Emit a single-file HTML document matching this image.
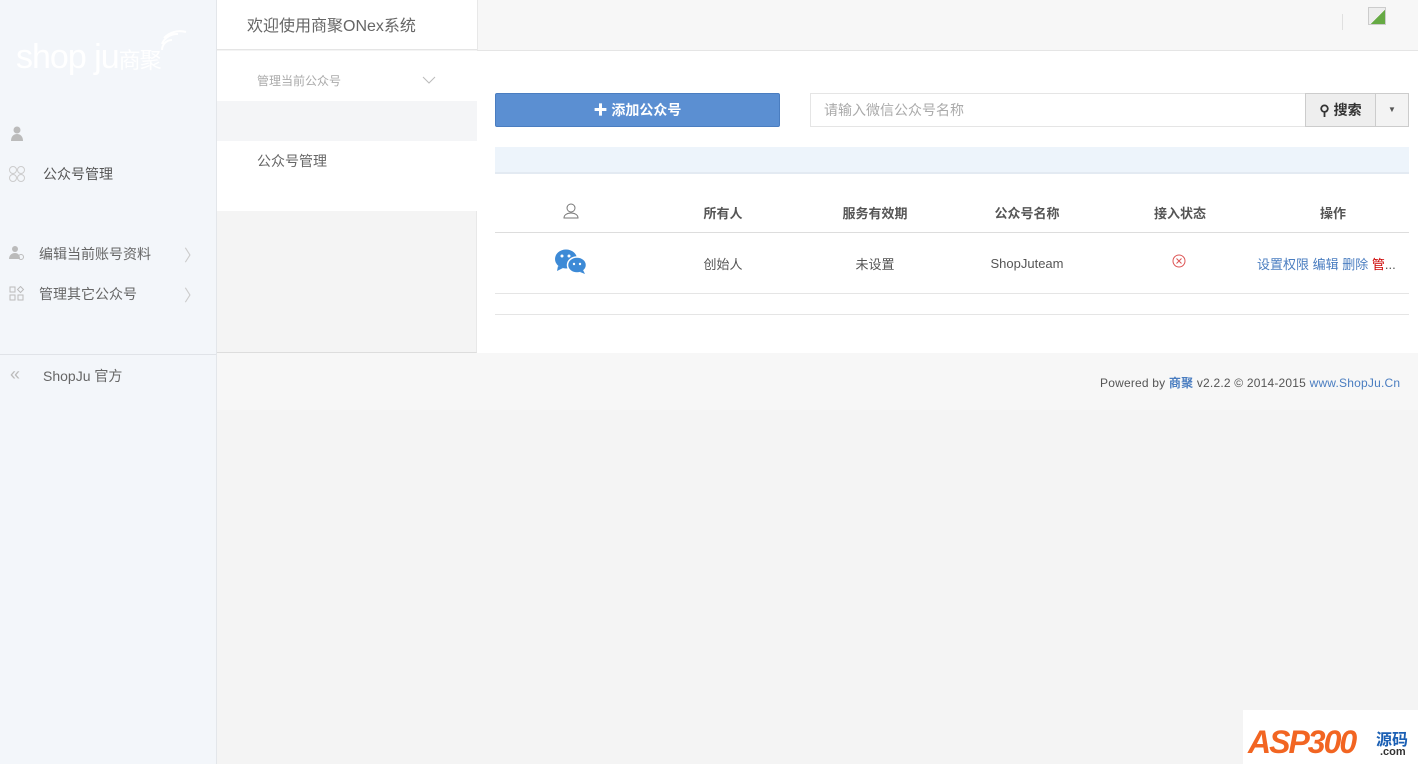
<!DOCTYPE html>
<html><head><meta charset="utf-8"><style>
*{margin:0;padding:0;box-sizing:border-box}
body{width:1418px;height:764px;overflow:hidden;background:#f4f4f4;font-family:"Liberation Sans","Noto Sans CJK SC",sans-serif;position:relative;color:#555}
.abs{position:absolute}
</style></head><body>
<!-- sidebar -->
<div class="abs" style="left:0;top:0;width:217px;height:764px;background:#f3f6fa;border-right:1px solid #e3e6ea"></div>
<div class="abs" style="left:16px;top:38px;font-size:34px;color:#fff;letter-spacing:-1px;font-family:'Liberation Sans',sans-serif">shop ju<span style="font-size:22px;font-family:'Noto Sans CJK SC',sans-serif">商聚</span></div>
<svg class="abs" style="left:160px;top:30px" width="30" height="24"><path d="M2 20a10 10 0 0 1 10-10M2 14a16 16 0 0 1 16-10M4 8a22 22 0 0 1 22-6" stroke="#fff" stroke-width="2" fill="none"/></svg>
<svg class="abs" style="left:10px;top:126px" width="14" height="16"><circle cx="7" cy="4" r="3.5" fill="#bbb"/><path d="M1 15c0-5 3-7 6-7s6 2 6 7z" fill="#bbb"/></svg>
<svg class="abs" style="left:8px;top:165px" width="18" height="18" fill="none" stroke="#ccc"><circle cx="5" cy="5" r="3.5"/><circle cx="13" cy="5" r="3.5"/><circle cx="5" cy="13" r="3.5"/><circle cx="13" cy="13" r="3.5"/></svg>
<div class="abs" style="left:43px;top:164px;font-size:14px;color:#555">公众号管理</div>
<svg class="abs" style="left:9px;top:245px" width="16" height="16"><circle cx="6" cy="4" r="3" fill="#bbb"/><path d="M0 14c0-4 3-6 6-6s5 2 5 6z" fill="#bbb"/><circle cx="12" cy="12" r="2.5" stroke="#bbb" fill="none"/></svg>
<div class="abs" style="left:39px;top:244px;font-size:14px;color:#666">编辑当前账号资料</div>
<div class="abs" style="left:184px;top:242px;font-size:16px;color:#ccc">〉</div>
<svg class="abs" style="left:9px;top:286px" width="16" height="16" fill="none" stroke="#bbb"><rect x="1" y="1" width="5" height="5"/><rect x="1" y="9" width="5" height="5"/><rect x="9" y="9" width="5" height="5"/><path d="M11.5 0.5l3 3-3 3-3-3z"/></svg>
<div class="abs" style="left:39px;top:284px;font-size:14px;color:#666">管理其它公众号</div>
<div class="abs" style="left:184px;top:282px;font-size:16px;color:#ccc">〉</div>
<div class="abs" style="left:0;top:354px;width:216px;border-top:1px solid #e0e3e8"></div>
<div class="abs" style="left:10px;top:364px;font-size:18px;color:#bbb">«</div>
<div class="abs" style="left:43px;top:366px;font-size:14px;color:#666">ShopJu 官方</div>
<!-- second column -->
<div class="abs" style="left:217px;top:0;width:260px;height:50px;background:#fff;border-bottom:1px solid #e5e5e5"></div>
<div class="abs" style="left:247px;top:12px;font-size:16px;color:#666">欢迎使用商聚ONex系统</div>
<div class="abs" style="left:217px;top:51px;width:260px;height:50px;background:#fff"></div>
<div class="abs" style="left:257px;top:72px;font-size:12px;color:#aaa">管理当前公众号</div>
<svg class="abs" style="left:422px;top:76px" width="14" height="9"><path d="M1 1l6 6 6-6" stroke="#bbb" fill="none"/></svg>
<div class="abs" style="left:217px;top:101px;width:260px;height:40px;background:#f4f5f7"></div>
<div class="abs" style="left:217px;top:141px;width:260px;height:70px;background:#fff"></div>
<div class="abs" style="left:257px;top:151px;font-size:14px;color:#666">公众号管理</div>
<div class="abs" style="left:217px;top:211px;width:260px;height:142px;background:#f4f4f4;border-bottom:1px solid #ddd;border-right:1px solid #e8e8e8"></div>
<!-- top bar -->
<div class="abs" style="left:477px;top:0;width:941px;height:51px;background:#f7f7f7;border-bottom:1px solid #e5e5e5;border-left:1px solid #e8e8e8"></div>
<div class="abs" style="left:1342px;top:14px;width:1px;height:16px;background:#e0e0e0"></div>
<div class="abs" style="left:1368px;top:7px;width:18px;height:18px;border:1px solid #ccc;background:linear-gradient(135deg,#eee 55%,#6a4 55%)"></div>
<!-- main -->
<div class="abs" style="left:477px;top:51px;width:941px;height:302px;background:#fff"></div>
<div class="abs" style="left:495px;top:93px;width:285px;height:34px;background:#5b8fd2;border:1px solid #4a7dc0;border-radius:2px;color:#fff;font-size:14px;font-weight:bold;text-align:center;line-height:32px">✚ 添加公众号</div>
<div class="abs" style="left:810px;top:93px;width:496px;height:34px;border:1px solid #e5e5e5;font-size:14px;color:#aaa;line-height:32px;padding-left:13px">请输入微信公众号名称</div>
<div class="abs" style="left:1305px;top:93px;width:71px;height:34px;background:#eee;border:1px solid #ccc;font-size:14px;font-weight:bold;color:#333;line-height:32px;text-align:center">⚲ 搜索</div>
<div class="abs" style="left:1375px;top:93px;width:34px;height:34px;background:#f3f3f3;border:1px solid #ccc;font-size:8px;color:#555;line-height:32px;text-align:center">▼</div>
<div class="abs" style="left:495px;top:147px;width:914px;height:27px;background:#edf4fb;border-bottom:2px solid #e3eaf2"></div>
<svg class="abs" style="left:563px;top:203px" width="16" height="16" fill="none" stroke="#777"><circle cx="8" cy="5" r="4"/><path d="M1 15c0-3 3-5 7-5s7 2 7 5z"/></svg>
<div class="abs" style="top:203px;left:495px;width:914px;font-size:13px;font-weight:bold;color:#555">
<span class="abs" style="left:185px;width:86px;text-align:center">所有人</span>
<span class="abs" style="left:330px;width:100px;text-align:center">服务有效期</span>
<span class="abs" style="left:482px;width:100px;text-align:center">公众号名称</span>
<span class="abs" style="left:635px;width:100px;text-align:center">接入状态</span>
<span class="abs" style="left:788px;width:100px;text-align:center">操作</span>
</div>
<div class="abs" style="left:495px;top:232px;width:914px;border-top:1px solid #ddd"></div>
<svg class="abs" style="left:554px;top:248px" width="34" height="28"><ellipse cx="12" cy="11" rx="11" ry="9.5" fill="#3d8ad6"/><path d="M4 18l-1 5 6-3z" fill="#3d8ad6"/><ellipse cx="23" cy="17" rx="9.5" ry="8" fill="#3d8ad6" stroke="#fff" stroke-width="1.5"/><path d="M29 22l2 4-5-2z" fill="#3d8ad6"/><circle cx="8" cy="8" r="1.5" fill="#fff"/><circle cx="15" cy="8" r="1.5" fill="#fff"/><circle cx="20" cy="16" r="1.2" fill="#fff"/><circle cx="26" cy="16" r="1.2" fill="#fff"/></svg>
<div class="abs" style="top:254px;left:495px;width:914px;font-size:13px;color:#555">
<span class="abs" style="left:185px;width:86px;text-align:center;top:0">创始人</span>
<span class="abs" style="left:330px;width:100px;text-align:center;top:0">未设置</span>
<span class="abs" style="left:482px;width:100px;text-align:center;top:1px;line-height:17px">ShopJuteam</span>
</div>
<svg class="abs" style="left:1172px;top:254px" width="14" height="14" fill="none" stroke="#d55"><circle cx="7" cy="7" r="6"/><path d="M4.5 4.5l5 5M9.5 4.5l-5 5"/></svg>
<div class="abs" style="left:1257px;top:254px;font-size:13px;color:#4a7dc0;white-space:nowrap">设置权限 编辑 删除 <span style="color:#c00">管</span><span style="color:#555">...</span></div>
<div class="abs" style="left:495px;top:293px;width:914px;border-top:1px solid #e5e5e5"></div>
<div class="abs" style="left:495px;top:314px;width:914px;border-top:1px solid #e5e5e5"></div>
<!-- footer -->
<div class="abs" style="left:217px;top:353px;width:1201px;height:57px;background:#f7f7f7"></div>
<div class="abs" style="left:1100px;top:374px;font-size:12px;color:#555;white-space:nowrap;letter-spacing:0.2px">Powered by <span style="color:#4a7dc0;font-weight:bold">商聚</span> v2.2.2 © 2014-2015 <span style="color:#4a7dc0">www.ShopJu.Cn</span></div>
<!-- watermark -->
<div class="abs" style="left:1243px;top:710px;width:175px;height:54px;background:#fff"></div>
<div class="abs" style="left:1248px;top:724px;font-size:32px;font-weight:bold;font-style:italic;color:#f26522;letter-spacing:-2px">ASP300</div>
<div class="abs" style="left:1376px;top:726px;font-size:16px;font-weight:bold;color:#1a5fb4">源码</div>
<div class="abs" style="left:1380px;top:746px;font-size:11px;font-weight:bold;color:#333">.com</div>
</body></html>
